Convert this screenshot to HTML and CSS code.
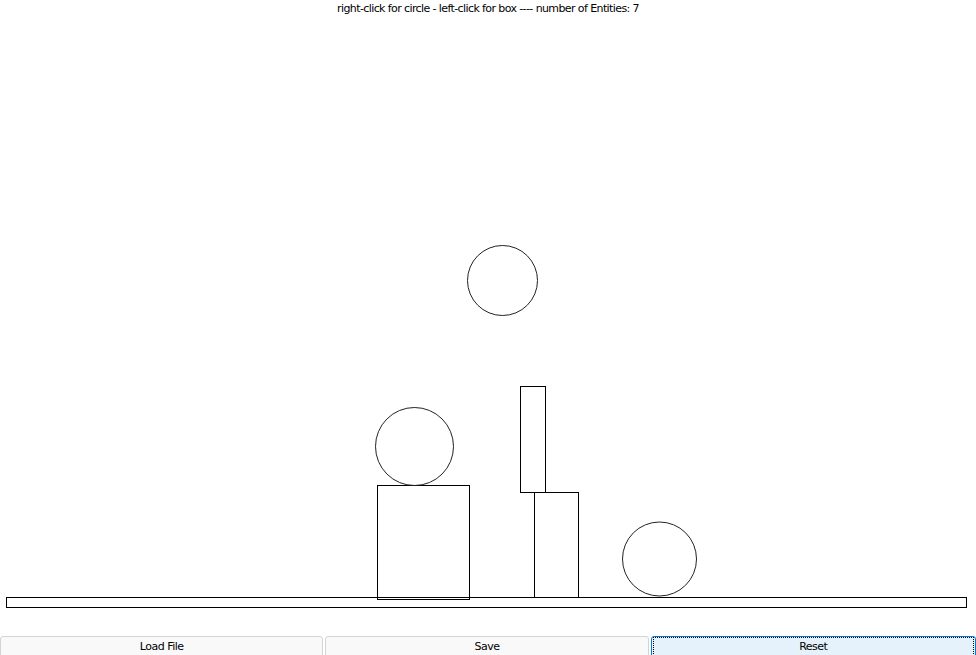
FILE: index.html
```html
<!DOCTYPE html>
<html>
<head>
<meta charset="utf-8">
<link rel="stylesheet" href="styles.css">
</head>
<body>
<div class="app">
  <div class="status">right-click for circle - left-click for box ---- number of Entities: 7</div>
  <div class="canvas">
    <svg class="world" width="976" height="618" viewBox="0 18 976 618">
      <g class="bodies" fill="none" stroke="#000" stroke-width="1" shape-rendering="crispEdges">
        <rect x="6.5" y="597.5" width="960" height="10"/>
        <rect x="377.5" y="485.5" width="92" height="114"/>
        <rect x="520.5" y="386.5" width="25" height="106"/>
        <rect x="534.5" y="492.5" width="44" height="105"/>
      </g>
      <g class="balls" fill="none" stroke="#222" stroke-width="1">
        <circle cx="502.5" cy="280.5" r="35"/>
        <circle cx="414.5" cy="446.5" r="39"/>
        <circle cx="659.5" cy="559" r="37"/>
      </g>
    </svg>
  </div>
  <div class="buttons">
    <button class="btn">Load File</button>
    <button class="btn">Save</button>
    <button class="btn focused"><span class="focus-ring">Reset</span></button>
  </div>
</div>
</body>
</html>
```
FILE: styles.css
```css
html, body {
  margin: 0;
  padding: 0;
  height: 655px;
  overflow: hidden;
  background: #fff;
}
.app {
  display: grid;
  grid-template-rows: 18px 618px 23px;
  width: 976px;
  font-family: "DejaVu Sans", sans-serif;
  font-size: 11px;
  color: #000;
}
.status {
  text-align: center;
  line-height: 18px;
  font-size: 11px;
  letter-spacing: -0.6px;
}
.canvas {
  position: relative;
}
.world {
  display: block;
}
.buttons {
  display: flex;
  gap: 2px;
}
.btn {
  flex: 1;
  margin: 0;
  padding: 1px 0 0;
  height: 23px;
  border: 1px solid #d4d4d4;
  border-radius: 3px 3px 0 0;
  background: #f9f9f9;
  font-family: "DejaVu Sans", sans-serif;
  font-size: 11px;
  letter-spacing: -0.5px;
  color: #000;
  line-height: 17px;
  text-align: center;
  display: flex;
  align-items: flex-start;
  justify-content: center;
}
.btn.focused {
  border: 1px solid #0078d7;
  background: #e5f1fb;
  padding: 0 1px;
}
.focus-ring {
  flex: 1;
  align-self: stretch;
  border: 1px dotted #000;
  line-height: 17px;
}
```
